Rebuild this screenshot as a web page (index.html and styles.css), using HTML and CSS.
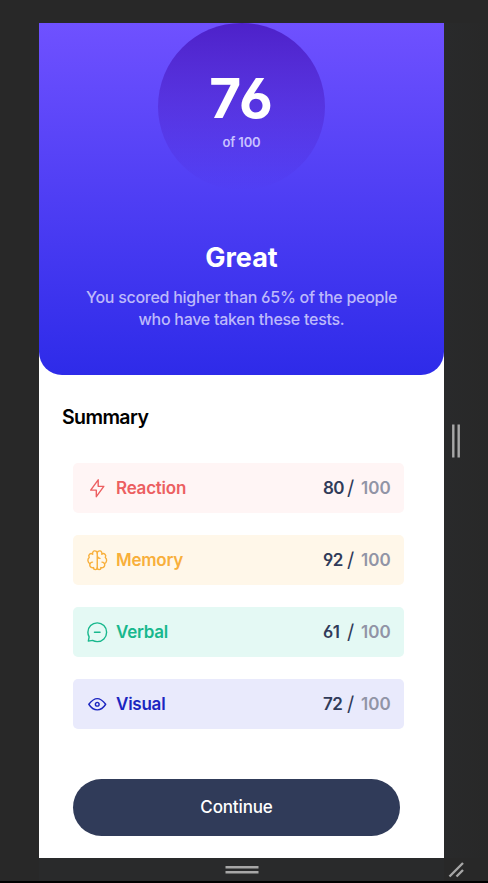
FILE: index.html
```html
<!DOCTYPE html>
<html lang="en">
<head>
<meta charset="utf-8">
<title>Results summary</title>
<link rel="stylesheet" href="styles.css">
</head>
<body>
<div class="stage">
  <main class="phone">
    <section class="hero">
      <div class="circle">
        <div class="score">76</div>
        <div class="of">of 100</div>
      </div>
      <h1 class="great">Great</h1>
      <p class="message">You scored higher than 65% of the people<br>who have taken these tests.</p>
    </section>
    <section class="summary">
      <h2 class="title">Summary</h2>
      <ul class="list">
        <li class="row reaction">
          <svg class="icon" viewBox="0 0 20 20"><path d="M10.833 8.333V2.5l-6.666 9.167h5V17.5l6.666-9.167h-5Z"/></svg>
          <span class="label">Reaction</span>
          <span class="value">80</span><span class="slash">/</span><span class="max">100</span>
        </li>
        <li class="row memory">
          <svg class="icon" viewBox="0 0 20 20"><path d="M5.833 11.667a2.5 2.5 0 1 0 .834 4.858"/><path d="M3.553 13.004a3.333 3.333 0 0 1-.728-5.53m.025-.067a2.083 2.083 0 0 1 2.983-2.824m.199.054A2.083 2.083 0 1 1 10 3.75v12.917a1.667 1.667 0 0 1-3.333 0M10 5.833a2.5 2.5 0 0 0 2.5 2.5m1.667 3.334a2.5 2.5 0 1 1-.834 4.858"/><path d="M16.447 13.004a3.334 3.334 0 0 0 .728-5.53m-.025-.067a2.083 2.083 0 0 0-2.983-2.824M10 3.75a2.085 2.085 0 0 1 2.538-2.033 2.084 2.084 0 0 1 1.43 2.92m-.635 12.03a1.667 1.667 0 0 1-3.333 0"/></svg>
          <span class="label">Memory</span>
          <span class="value">92</span><span class="slash">/</span><span class="max">100</span>
        </li>
        <li class="row verbal">
          <svg class="icon" viewBox="0 0 20 20"><path d="M7.5 10h5M10 18.333A8.333 8.333 0 1 0 1.667 10c0 1.518.406 2.942 1.115 4.167l-.699 3.75 3.75-.699A8.295 8.295 0 0 0 10 18.333Z"/></svg>
          <span class="label">Verbal</span>
          <span class="value">61</span><span class="slash">/</span><span class="max">100</span>
        </li>
        <li class="row visual">
          <svg class="icon" viewBox="0 0 20 20"><path d="M10 11.667a1.667 1.667 0 1 0 0-3.334 1.667 1.667 0 0 0 0 3.334Z"/><path d="M17.5 10c-1.574 2.492-4.402 5-7.5 5s-5.926-2.508-7.5-5C4.416 7.632 6.66 5 10 5s5.584 2.632 7.5 5Z"/></svg>
          <span class="label">Visual</span>
          <span class="value">72</span><span class="slash">/</span><span class="max">100</span>
        </li>
      </ul>
      <button class="continue">Continue</button>
    </section>
  </main>
  <div class="side"><svg width="9" height="34" viewBox="0 0 9 34"><path d="M1.3 .5v33M6.7 .5v33"/></svg></div>
  <div class="bottom"><svg width="34" height="8" viewBox="0 0 34 8"><path d="M.5 1.3h33M.5 6.3h33"/></svg></div>
  <div class="corner"><svg width="17" height="16" viewBox="0 0 17 16"><path d="M1.5 14.5L15 1M8.5 14.5l6.5-6.5"/></svg></div>
</div>
</body>
</html>
```

FILE: styles.css
```css
* { box-sizing: border-box; }
body {
  margin: 0;
  background: #282828;
  font-family: Inter, "Liberation Sans", sans-serif;
  font-feature-settings: "ss01";
}
.stage {
  height: 883px;
  padding: 23px 0 0 39px;
  display: grid;
  grid-template-columns: 405px 44px;
  grid-template-rows: 835px 23px;
  border-bottom: 2px solid #000;
  overflow: hidden;
}
.phone { background: #fff; }
.hero {
  height: 352px;
  border-radius: 0 0 23px 23px;
  background: linear-gradient(#6f51ff, #2e2be9);
  color: #fff;
  display: flex;
  flex-direction: column;
  align-items: center;
}
.circle {
  width: 167px;
  height: 167px;
  border-radius: 50%;
  background: linear-gradient(#4d21c9, rgba(37, 33, 201, 0));
  text-align: center;
}
.score {
  margin-top: 45px;
  font-size: 55px;
  line-height: 60px;
  font-weight: 700;
  letter-spacing: 1px;
}
.of {
  margin-top: 5px;
  font-size: 13px;
  line-height: 18px;
  font-weight: 600;
  letter-spacing: -.15px;
  color: #c8c1ff;
}
.great {
  margin: 51px 0 0;
  font-size: 27px;
  line-height: 34px;
  font-weight: 700;
}
.message {
  margin: 11px 0 0;
  font-size: 16px;
  line-height: 22px;
  font-weight: 500;
  letter-spacing: -.27px;
  text-align: center;
  white-space: nowrap;
  color: #bdb9fb;
}
.summary {
  padding: 28px 40px 0 34px;
}
.title {
  margin: 0 0 0 -11px;
  font-size: 19.5px;
  line-height: 28px;
  font-weight: 600;
  letter-spacing: -.6px;
  color: #000;
}
.list {
  margin: 32px 0 0;
  padding: 0;
  list-style: none;
  display: grid;
  gap: 22px;
}
.row {
  height: 50px;
  padding: 0 14px 0 13px;
  border-radius: 5px;
  display: flex;
  align-items: center;
  font-size: 17px;
  font-weight: 600;
}
.icon {
  width: 22.5px;
  height: 22.5px;
  margin-right: 7.5px;
  fill: none;
  stroke: currentColor;
  stroke-width: 1.25;
  stroke-linecap: round;
  stroke-linejoin: round;
}
.label { flex: 1; letter-spacing: -.24px; }
.reaction { background: #fff5f5; color: #ec5f61; }
.memory { background: #fff7e9; color: #f8af3b; }
.verbal { background: #e4f9f4; color: #18b88d; }
.visual { background: #e9eafc; color: #1b25c0; }
.value, .slash { color: #303b59; }
.value { width: 24px; letter-spacing: -.6px; }
.slash { width: 14px; font-size: 20px; font-weight: 400; }
.max { color: #9194a6; width: 29px; }
.continue {
  display: block;
  width: 327px;
  height: 57px;
  margin-top: 50px;
  padding: 0;
  border: 0;
  border-radius: 29px;
  background: #303b59;
  color: #fff;
  font: 500 17px/57px Inter, "Liberation Sans", sans-serif;
  letter-spacing: -.15px;
}
.side {
  padding-left: 8px;
  display: flex;
  align-items: center;
  background: linear-gradient(90deg, #292a2b, #282828);
}
.bottom {
  display: flex;
  align-items: center;
  justify-content: center;
  background: #292a2b;
}
.corner {
  display: flex;
  align-items: center;
  padding-left: 4px;
}
.side svg, .bottom svg, .corner svg {
  fill: none;
  stroke: #a7a7a7;
  stroke-width: 2.4;
}
```
